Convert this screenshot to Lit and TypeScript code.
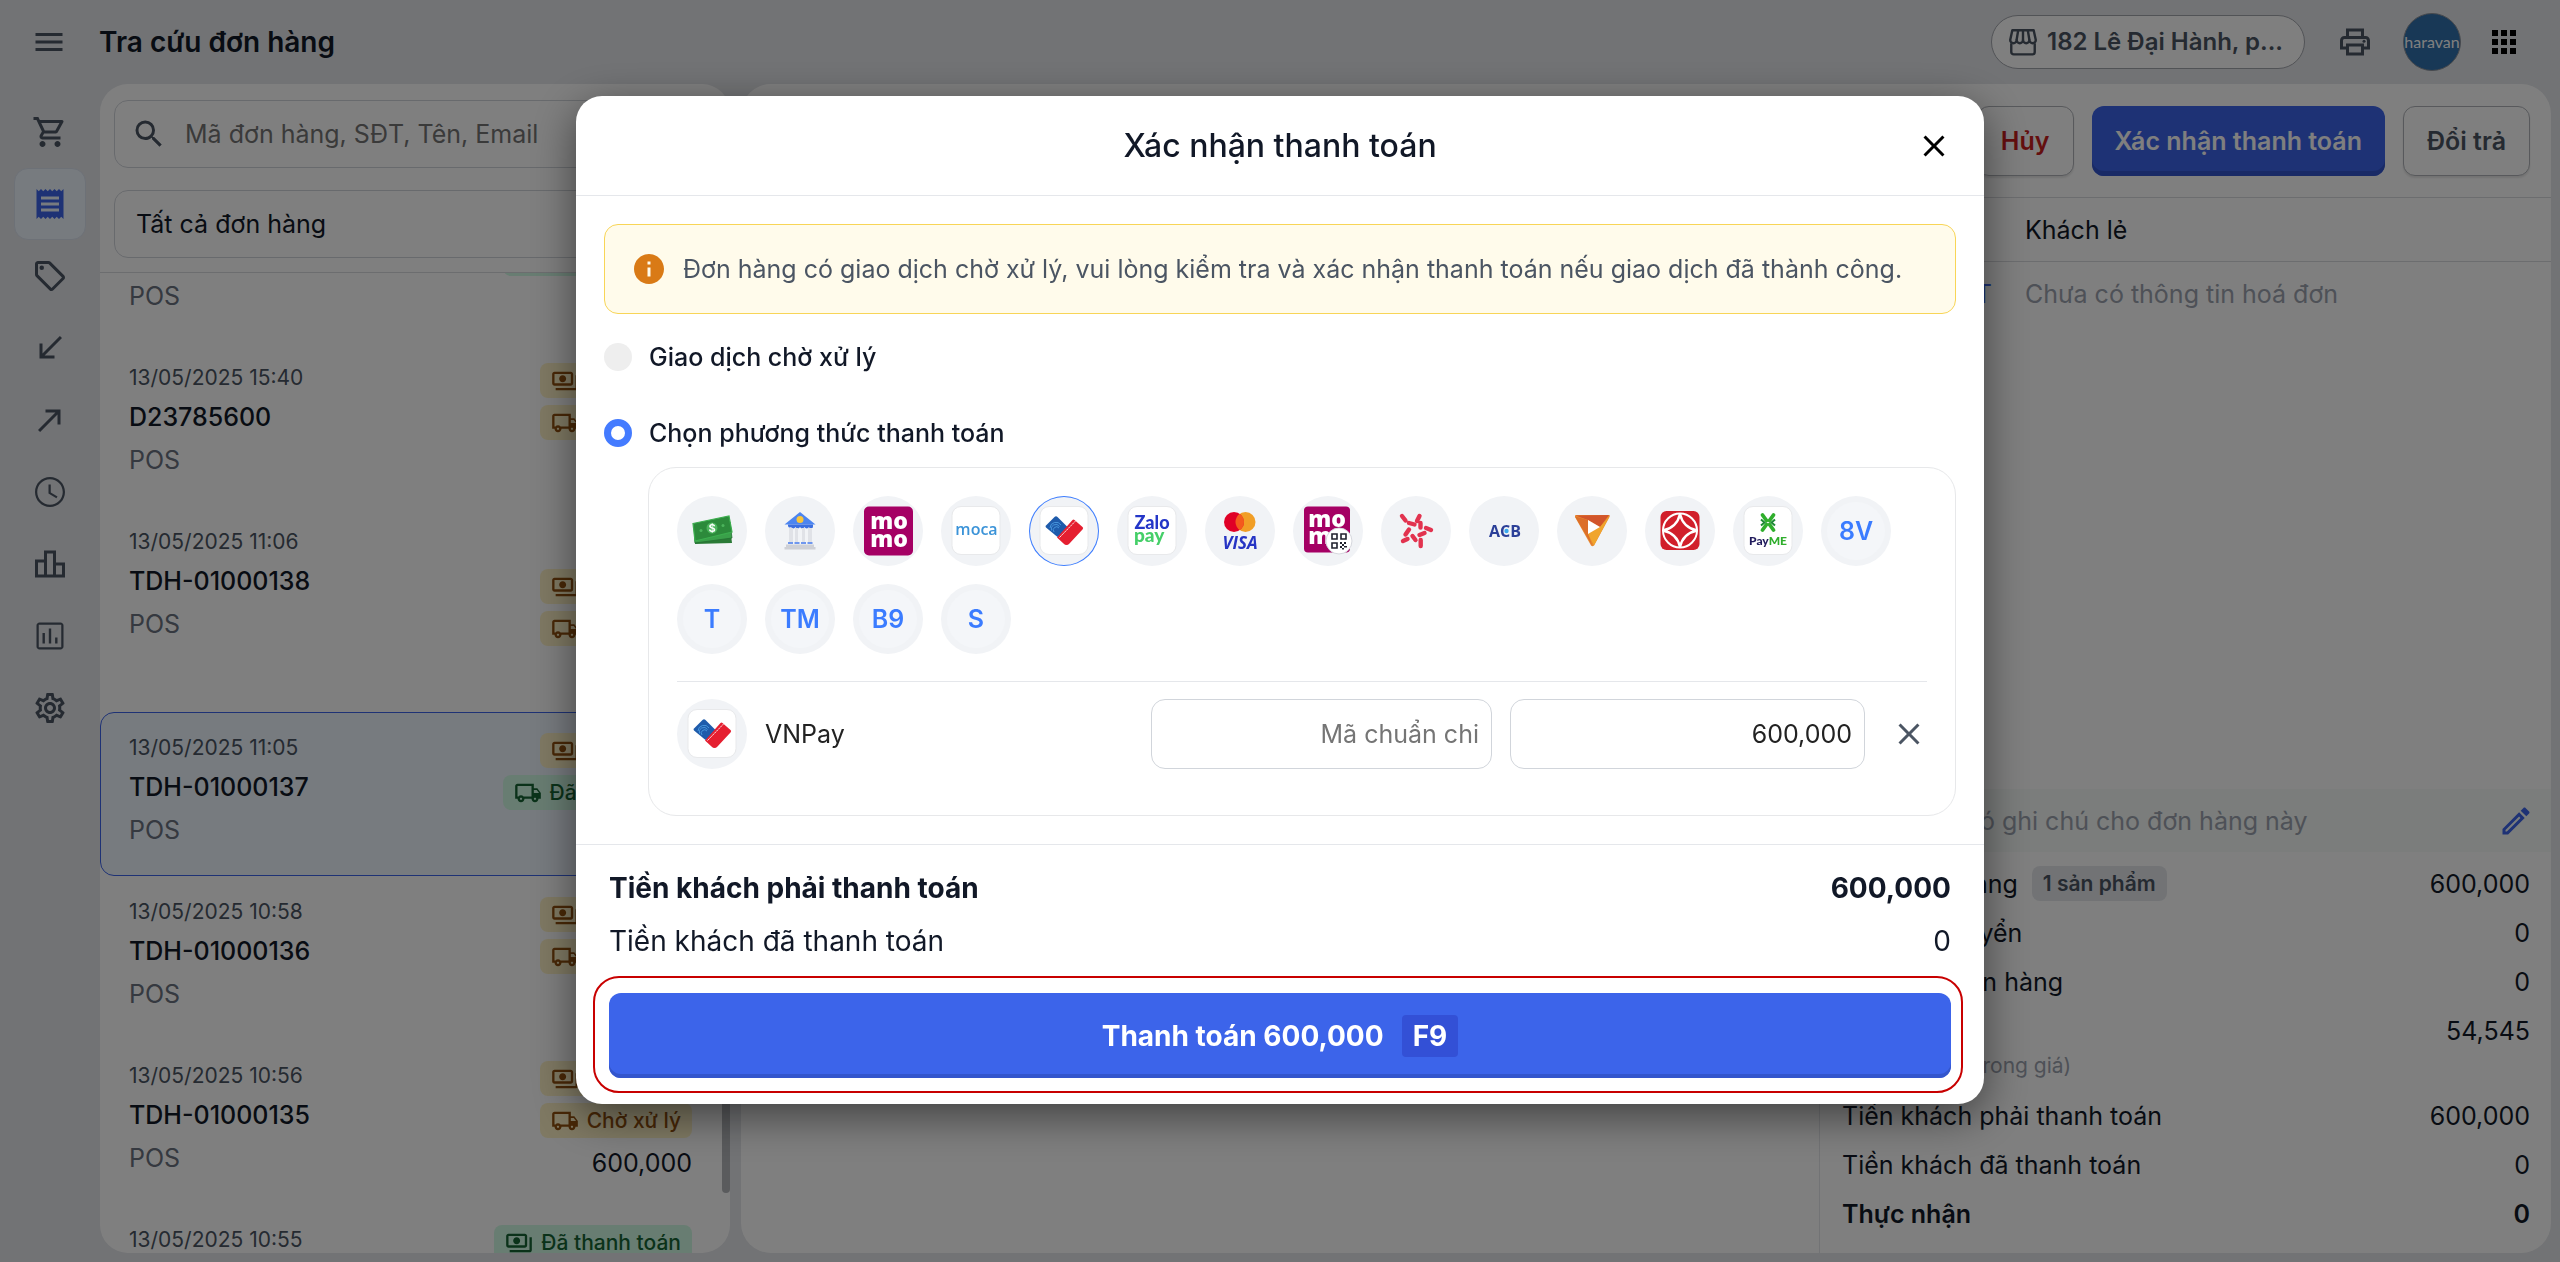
import { LitElement, html, css, svg, nothing } from "lit";
import type { TemplateResult, SVGTemplateResult } from "lit";
import { customElement, property, state } from "lit/decorators.js";
import { classMap } from "lit/directives/class-map.js";

const ICONS: Record<string, SVGTemplateResult> = {
  menu: svg`<path d="M3 18h18v-2H3v2zm0-5h18v-2H3v2zm0-7v2h18V6H3z"/>`,
  cart: svg`<path d="M15.55 13c.75 0 1.41-.41 1.75-1.03l3.58-6.49A.996.996 0 0 0 20.01 4H5.21l-.94-2H1v2h2l3.6 7.59-1.35 2.44C4.52 15.37 5.48 17 7 17h12v-2H7l1.1-2h7.45zM6.16 6h12.15l-2.76 5H8.53L6.16 6zM7 18c-1.1 0-1.99.9-1.99 2S5.9 22 7 22s2-.9 2-2-.9-2-2-2zm10 0c-1.1 0-1.99.9-1.99 2s.89 2 1.99 2 2-.9 2-2-.9-2-2-2z"/>`,
  receipt: svg`<path d="M18 17H6v-2h12v2zm0-4H6v-2h12v2zm0-4H6V7h12v2zM3 22l1.5-1.5L6 22l1.5-1.5L9 22l1.5-1.5L12 22l1.5-1.5L15 22l1.5-1.5L18 22l1.5-1.5L21 22V2l-1.5 1.5L18 2l-1.5 1.5L15 2l-1.5 1.5L12 2l-1.5 1.5L9 2 7.5 3.5 6 2 4.5 3.5 3 2v20z"/>`,
  tag: svg`<path d="M21.41 11.58l-9-9C12.05 2.22 11.55 2 11 2H4c-1.1 0-2 .9-2 2v7c0 .55.22 1.05.59 1.42l9 9c.36.36.86.58 1.41.58s1.05-.22 1.41-.59l7-7c.37-.36.59-.86.59-1.41s-.23-1.06-.59-1.42zM13 20.01L4 11V4h7v-.01l9 9-7 7.02z"/><circle cx="6.5" cy="6.5" r="1.5"/>`,
  southWest: svg`<path d="M15 19v-2H8.41L20 5.41 18.59 4 7 15.59V9H5v10h10z"/>`,
  northEast: svg`<path d="M9 5v2h6.59L4 18.59 5.41 20 17 8.41V15h2V5H9z"/>`,
  clock: svg`<path d="M11.99 2C6.47 2 2 6.48 2 12s4.47 10 9.99 10C17.52 22 22 17.52 22 12S17.52 2 11.99 2zM12 20.5c-4.7 0-8.5-3.8-8.5-8.5s3.8-8.5 8.5-8.5 8.5 3.8 8.5 8.5-3.8 8.5-8.5 8.5zm.5-13.5H11v6l5.25 3.15.75-1.23-4.5-2.67z"/>`,
  board: svg`<path d="M16 11V3H8v6H2v12h20V11h-6zm-6-6h4v14h-4V5zm-6 6h4v8H4v-8zm16 8h-4v-6h4v6z"/>`,
  report: svg`<path d="M19 3H5c-1.1 0-2 .9-2 2v14c0 1.1.9 2 2 2h14c1.1 0 2-.9 2-2V5c0-1.1-.9-2-2-2zm.5 16.5h-15v-15h15v15zM7 10h1.6v7H7zm4.2-3h1.6v10h-1.6zm4.2 6H17v4h-1.6z"/>`,
  gear: svg`<path d="M19.43 12.98c.04-.32.07-.64.07-.98 0-.34-.03-.66-.07-.98l2.11-1.65c.19-.15.24-.42.12-.64l-2-3.46c-.09-.16-.26-.25-.44-.25-.06 0-.12.01-.17.03l-2.49 1c-.52-.4-1.08-.73-1.69-.98l-.38-2.65C14.46 2.18 14.25 2 14 2h-4c-.25 0-.46.18-.49.42l-.38 2.65c-.61.25-1.17.59-1.69.98l-2.49-1c-.06-.02-.12-.03-.18-.03-.17 0-.34.09-.43.25l-2 3.46c-.13.22-.07.49.12.64l2.11 1.65c-.04.32-.07.65-.07.98 0 .33.03.66.07.98l-2.11 1.65c-.19.15-.24.42-.12.64l2 3.46c.09.16.26.25.44.25.06 0 .12-.01.17-.03l2.49-1c.52.4 1.08.73 1.69.98l.38 2.65c.03.24.24.42.49.42h4c.25 0 .46-.18.49-.42l.38-2.65c.61-.25 1.17-.59 1.69-.98l2.49 1c.06.02.12.03.18.03.17 0 .34-.09.43-.25l2-3.46c.12-.22.07-.49-.12-.64l-2.11-1.65zm-1.98-1.71c.04.31.05.52.05.73 0 .21-.02.43-.05.73l-.14 1.13.89.7 1.08.84-.7 1.21-1.27-.51-1.04-.42-.9.68c-.43.32-.84.56-1.25.73l-1.06.43-.16 1.13-.2 1.35h-1.4l-.19-1.35-.16-1.13-1.06-.43c-.43-.18-.83-.41-1.23-.71l-.91-.7-1.06.43-1.27.51-.7-1.21 1.08-.84.89-.7-.14-1.13c-.03-.31-.05-.54-.05-.74s.02-.43.05-.73l.14-1.13-.89-.7-1.08-.84.7-1.21 1.27.51 1.04.42.9-.68c.43-.32.84-.56 1.25-.73l1.06-.43.16-1.13.2-1.35h1.39l.19 1.35.16 1.13 1.06.43c.43.18.83.41 1.23.71l.91.7 1.06-.43 1.27-.51.7 1.21-1.07.85-.89.7.14 1.13zM12 8c-2.21 0-4 1.79-4 4s1.79 4 4 4 4-1.79 4-4-1.79-4-4-4zm0 6c-1.1 0-2-.9-2-2s.9-2 2-2 2 .9 2 2-.9 2-2 2z"/>`,
  search: svg`<path d="M15.5 14h-.79l-.28-.27A6.471 6.471 0 0 0 16 9.5 6.5 6.5 0 1 0 9.5 16c1.61 0 3.09-.59 4.23-1.57l.27.28v.79l5 4.99L20.49 19l-4.99-5zm-6 0C7.01 14 5 11.99 5 9.5S7.01 5 9.5 5 14 7.01 14 9.5 11.99 14 9.5 14z"/>`,
  payments: svg`<path d="M19 14V6c0-1.1-.9-2-2-2H3c-1.1 0-2 .9-2 2v8c0 1.1.9 2 2 2h14c1.1 0 2-.9 2-2zm-2 0H3V6h14v8zm-7-7c-1.66 0-3 1.34-3 3s1.34 3 3 3 3-1.34 3-3-1.34-3-3-3zm13 0v11c0 1.1-.9 2-2 2H4v-2h17V7h2z"/>`,
  truck: svg`<path d="M20 8h-3V4H3c-1.1 0-2 .9-2 2v11h2c0 1.66 1.34 3 3 3s3-1.34 3-3h6c0 1.66 1.34 3 3 3s3-1.34 3-3h2v-5l-3-4zM6 18c-.55 0-1-.45-1-1s.45-1 1-1 1 .45 1 1-.45 1-1 1zm9-3H8.22c-.55-.61-1.33-1-2.22-1s-1.67.39-2.22 1H3V6h12v9zm3 3c-.55 0-1-.45-1-1s.45-1 1-1 1 .45 1 1-.45 1-1 1zm-1-6V9.5h2.5l1.96 2.5H17z"/>`,
  print: svg`<path d="M19 8h-1V3H6v5H5c-1.66 0-3 1.34-3 3v6h4v4h12v-4h4v-6c0-1.66-1.34-3-3-3zM8 5h8v3H8V5zm8 12v2H8v-4h8v2zm2-2v-2H6v2H4v-4c0-.55.45-1 1-1h14c.55 0 1 .45 1 1v4h-2z"/><circle cx="18" cy="11.5" r="1"/>`,
  apps: svg`<path d="M4 8h4V4H4v4zm6 12h4v-4h-4v4zm-6 0h4v-4H4v4zm0-6h4v-4H4v4zm6 0h4v-4h-4v4zm6-10v4h4V4h-4zm-6 4h4V4h-4v4zm6 6h4v-4h-4v4zm0 6h4v-4h-4v4z"/>`,
  edit: svg`<path d="M14.06 9.02l.92.92L5.92 19H5v-.92l9.06-9.06M17.66 3c-.25 0-.51.1-.7.29l-1.83 1.83 3.75 3.75 1.83-1.83c.39-.39.39-1.02 0-1.41l-2.34-2.34c-.2-.2-.45-.29-.71-.29zm-3.6 3.19L3 17.25V21h3.75L17.81 9.94l-3.75-3.75z"/>`,
  info: svg`<path d="M12 2C6.48 2 2 6.48 2 12s4.48 10 10 10 10-4.48 10-10S17.52 2 12 2zm1 15h-2v-6h2v6zm0-8h-2V7h2v2z"/>`,
  close: svg`<path d="M19 6.41L17.59 5 12 10.59 6.41 5 5 6.41 10.59 12 5 17.59 6.41 19 12 13.41 17.59 19 19 17.59 13.41 12z"/>`,
  store: svg`<g fill="none" stroke="currentColor" stroke-width="1.8" stroke-linejoin="round"><path d="M4 3.2h16l1.6 7.3a2.4 2.4 0 0 1-4.8 0 2.4 2.4 0 0 1-4.8 0 2.4 2.4 0 0 1-4.8 0 2.4 2.4 0 0 1-4.8 0z"/><path d="M8.4 3.2l-1.2 7.3M12 3.2v7.3M15.6 3.2l1.2 7.3M3.2 13v6.5a1.8 1.8 0 0 0 1.8 1.8h14a1.8 1.8 0 0 0 1.8-1.8V13"/></g>`,
};

const icon = (name: string, cls = "") =>
  html`<svg class="icon ${cls}" viewBox="0 0 24 24" fill="currentColor" aria-hidden="true">${ICONS[name]}</svg>`;

const tile = svg`<rect x="11" y="10.5" width="48" height="48" rx="9" fill="#fff" stroke="#e8e9eb"/>`;

const LOGOS: Record<string, SVGTemplateResult> = {
  cash: svg`
    <path d="M17 33l36-2 2 16-37 1z" fill="#2a7a36"/>
    <path d="M17 30l36-4 2 16-37 5z" fill="#3aa04a" stroke="#257032" stroke-width=".8"/>
    <path d="M16 27.500l36-7.500 3 16-37 9z" fill="#2c8a3b" stroke="#3cae4e" stroke-width="1.2"/>
    <circle cx="35" cy="32" r="5.500" fill="#4cb45c"/><circle cx="24" cy="34.500" r="1.500" fill="#4cb45c"/><circle cx="46" cy="29.500" r="1.500" fill="#4cb45c"/>
    <text x="35" y="36" class="l-dollar">$</text>`,
  bank: svg`
    <path d="M35 16l15.500 12.500h-31z" fill="#4c85f0"/>
    <path d="M23 28.500h25v1.500a2 2 0 0 1-4 1 2.500 2.500 0 0 1-4.500 0 2.500 2.500 0 0 1-4.500 0 2.500 2.500 0 0 1-4.500 0 2.500 2.500 0 0 1-4.500 0 2 2 0 0 1-3-1z" fill="#3b6fe0"/>
    <circle cx="35" cy="23.500" r="3.500" fill="#f9c53c"/>
    <path d="M24 32h4v14h-4zM30 32h3v14h-3zM37 32h3v14h-3zM43 32h4v14h-4z" fill="#e0e2e7"/>
    <path d="M23 46h5v2h-5zM29.500 46h5v2h-5zM36 46h5v2h-5zM42.500 46h5v2h-5z" fill="#6f97ee"/>
    <path d="M21 48.500h28v2.500h1.500v2.500h-31V51H21z" fill="#ced0d6"/>`,
  momo: svg`
    <rect x="11" y="10.500" width="49" height="49" rx="5" fill="#a50064"/>
    <text x="36" y="33" class="l-momo">mo</text><text x="36" y="51" class="l-momo">mo</text>`,
  moca: svg`${tile}<text x="35.500" y="39" class="l-moca">moca</text>`,
  vnpay: svg`${tile}
    <path d="M17 29.500l8.500-8.500q1.500-1.500 3 0l11 11-11 9-11.500-9.500q-1-1 0-2z" fill="#1e5bab"/>
    <path d="M21 32a6 6 0 0 1 11-3M22.500 34.500a4.500 4.500 0 0 1 8-4M25 36a3 3 0 0 1 5-4" fill="none" stroke="#4b9be0" stroke-width=".9"/>
    <path d="M28 41.500l15.500-17.500q1-1 2 0l8 7q1.200 1 .2 2.200L40.500 47.500q-3 3-6 0z" fill="#e51f30"/>
    <path d="M30.500 41.500l16-16.500" stroke="#fff" stroke-width=".9" stroke-dasharray="2 .6"/>`,
  zalo: svg`${tile}<text x="35" y="33" class="l-zalo">Zalo</text><text x="17" y="46" class="l-pay">pay</text>`,
  visa: svg`
    <circle cx="40.500" cy="26" r="10" fill="#f19e26"/><circle cx="29" cy="26" r="10" fill="#e00026"/>
    <path d="M34.750 17.800a10 10 0 0 1 0 16.400 10 10 0 0 1 0-16.400z" fill="#f45a1d"/>
    <text x="35" y="53" class="l-visa">VISA</text>`,
  momoqr: svg`
    <rect x="11" y="10.500" width="46" height="46" rx="4" fill="#a50064"/>
    <text x="34" y="31" class="l-momo">mo</text><text x="34" y="48" class="l-momo">mo</text>
    <circle cx="46" cy="45" r="13" fill="#fff" stroke="#d6d8de"/>
    <g fill="none" stroke="#20222e" stroke-width="1.600"><path d="M39 38h5v5h-5zM48 38h5v5h-5zM39 47h5v5h-5z"/></g>
    <path d="M47 46h2v2h-2zM51 46h2v2h-2zM49 48h2v2h-2zM47 50h2v2h-2zM51 50h3v1.500h-3zM49 52h2v1.500h-2z" fill="#20222e"/>`,
  star: svg`<path fill="none" stroke="#e2334f" stroke-width="4.400" stroke-linecap="round" d="M21 20l3.500 4.500M28 27l5.500 1.500M38.500 20L36 25M39.500 27v4.500M45 32l5 2M38.500 39l5-2M39.700 44v6M31.500 40l3 4M22 45l4.500-2M24.500 38.500l3.500-5"/>`,
  acb: svg`<text x="36" y="41" class="l-acb">ACB</text><circle cx="37.500" cy="35" r="2.200" fill="#3aa9ee"/>`,
  play: svg`
    <path d="M19 19h33q1.500 0 .5 2L37 49.500q-1.500 1.500-3 0L18 21q-.5-2 1-2z" fill="#e8892f"/>
    <path d="M18.500 19.500L52 19l-9 12-12-7z" fill="#d2552b"/><path d="M43 31l9.500-11L37 49.500 31 38z" fill="#f0a52c"/><path d="M18 20.500L31 24v14l4.500 12z" fill="#dc6f2a"/>
    <path d="M31 24l12 7-12 7z" fill="#fff"/>`,
  tech: svg`
    <rect x="15.500" y="15" width="39" height="39" rx="6" fill="#d11f2b"/>
    <circle cx="35" cy="34.500" r="17" fill="none" stroke="#fff" stroke-width="2"/>
    <path d="M35 18q3 13.500 17 16.500-14 3-17 16.500-3-13.500-17-16.500 14-3 17-16.500z" fill="#d11f2b" stroke="#fff" stroke-width="2.400"/>`,
  payme: svg`${tile}
    <path d="M29.500 19l4 5.500M40.500 19l-4 5.500M29.500 34l4-5.500M40.500 34l-4-5.500" stroke="#2fae2c" stroke-width="3.800" stroke-linecap="round"/>
    <path d="M28 23.500l3.500 3-3.500 3M42 23.500l-3.500 3 3.500 3" stroke="#1d8a35" stroke-width="2" fill="none"/>
    <text x="35" y="49" class="l-payme">Pay<tspan fill="#2fae2c">ME</tspan></text>`,
};

interface Method { id: string; label: string; logo?: string; }
const METHODS: Method[] = [
  { id: "cash", label: "Tiền mặt", logo: "cash" },
  { id: "bank", label: "Chuyển khoản", logo: "bank" },
  { id: "momo", label: "MoMo", logo: "momo" },
  { id: "moca", label: "Moca", logo: "moca" },
  { id: "vnpay", label: "VNPay", logo: "vnpay" },
  { id: "zalo", label: "ZaloPay", logo: "zalo" },
  { id: "visa", label: "Visa", logo: "visa" },
  { id: "momoqr", label: "MoMo QR", logo: "momoqr" },
  { id: "star", label: "VPBank", logo: "star" },
  { id: "acb", label: "ACB", logo: "acb" },
  { id: "play", label: "Payoo", logo: "play" },
  { id: "tech", label: "SSI", logo: "tech" },
  { id: "payme", label: "PayME", logo: "payme" },
  { id: "8v", label: "8V" },
  { id: "t", label: "T" },
  { id: "tm", label: "TM" },
  { id: "b9", label: "B9" },
  { id: "s", label: "S" },
];

interface Badge { icon: string; text: string; ok?: boolean; }
interface Order { time: string; code: string; badges: Badge[]; selected?: boolean; }
const paid: Badge = { icon: "payments", text: "Đã thanh toán", ok: true };
const delivered: Badge = { icon: "truck", text: "Đã giao hàng", ok: true };
const payWait: Badge = { icon: "payments", text: "Chờ xử lý" };
const shipWait: Badge = { icon: "truck", text: "Chờ xử lý" };
const ORDERS: Order[] = [
  { time: "13/05/2025 15:42", code: "TDH-01000139", badges: [paid, delivered] },
  { time: "13/05/2025 15:40", code: "D23785600", badges: [payWait, shipWait] },
  { time: "13/05/2025 11:06", code: "TDH-01000138", badges: [{ icon: "tag", text: "Trả" }, payWait, shipWait] },
  { time: "13/05/2025 11:05", code: "TDH-01000137", badges: [payWait, delivered], selected: true },
  { time: "13/05/2025 10:58", code: "TDH-01000136", badges: [payWait, shipWait] },
  { time: "13/05/2025 10:56", code: "TDH-01000135", badges: [payWait, shipWait] },
  { time: "13/05/2025 10:55", code: "TDH-01000134", badges: [paid, delivered] },
];

const base = css`
  * { box-sizing: border-box; }
  button, input, select { font: inherit; color: inherit; }
  button { cursor: pointer; padding: 0; border: 0; background: none; }
  h1, h2, p { margin: 0; font-weight: inherit; }
  .icon { width: 36px; height: 36px; display: block; flex: none; }
`;

@customElement("pos-sidebar")
export class PosSidebar extends LitElement {
  static styles = [base, css`
    :host { display: block; }
    nav { display: flex; flex-direction: column; align-items: center; padding: 12px 1px 0 0; }
    a { display: grid; place-items: center; width: 72px; height: 72px; color: #4b5563; border: 1px solid transparent; border-radius: 14px; }
    .active { color: #3c64ea; background: #eff6ff; border-color: #dbe3ef; }
  `];
  render() {
    const items: [string, string][] = [
      ["cart", "Bán hàng"], ["receipt", "Đơn hàng"], ["tag", "Sản phẩm"], ["southWest", "Nhập"], ["northEast", "Xuất"],
      ["clock", "Ca làm việc"], ["board", "Xếp hạng"], ["report", "Báo cáo"], ["gear", "Cài đặt"],
    ];
    return html`<nav>${items.map(([name, label]) => html`
      <a href="#" aria-label=${label} class=${classMap({ active: name === "receipt" })}>${icon(name)}</a>`)}</nav>`;
  }
}

@customElement("order-list")
export class OrderList extends LitElement {
  static styles = [base, css`
    :host { display: flex; flex-direction: column; position: relative; background: #fff; border-radius: 28px; overflow: hidden; min-height: 0; }
    .filters { display: flex; flex-direction: column; gap: 22px; padding: 16px 14px 14px; border-bottom: 1px solid #d9dbdf; }
    .field { display: flex; align-items: center; height: 68px; border: 1px solid #d1d5db; border-radius: 14px; }
    .search { padding: 0 16px; gap: 16px; color: #4b5563; }
    .search input { flex: 1; min-width: 0; border: 0; outline: 0; background: none; }
    .search input::placeholder { color: #757575; }
    select.field { width: 100%; padding: 0 21px; appearance: none; background: #fff; color: #111827; }
    .scroll { flex: 1; min-height: 0; overflow: hidden; }
    .card { display: flex; justify-content: space-between; padding: 20px 37px 0 28px; min-height: 164px; border: 1px solid transparent; border-radius: 14px; }
    .selected { background: #eff6ff; border-color: #3c64ea; }
    .time { font-size: 21px; line-height: 30px; color: #4b5563; }
    .code { font-weight: 500; line-height: 48px; color: #111827; }
    .src { line-height: 38px; color: #6b7280; }
    .side { display: flex; flex-direction: column; align-items: flex-end; gap: 7px; padding-bottom: 22px; }
    .badge { display: flex; align-items: center; gap: 8px; height: 35px; padding: 0 11px; border-radius: 8px; background: #fef3c7; color: #92500e; font-size: 21px; font-weight: 500; }
    .badge .icon { width: 28px; height: 28px; }
    .ok { background: #d1fae5; color: #166534; }
    .amount { line-height: 36px; color: #111827; }
    .thumb { position: absolute; right: 0; bottom: 60px; width: 8px; height: 620px; border-radius: 4px; background: #b4b6ba; }
  `];
  updated() {
    const scroller = this.renderRoot.querySelector(".scroll");
    if (scroller) scroller.scrollTop = 95;
  }
  render() {
    return html`
      <div class="filters">
        <label class="field search">${icon("search")}<input type="search" aria-label="Tìm đơn hàng" placeholder="Mã đơn hàng, SĐT, Tên, Email"></label>
        <select class="field" aria-label="Loại đơn hàng"><option>Tất cả đơn hàng</option></select>
      </div>
      <div class="scroll">${ORDERS.map((o) => html`
        <article class=${classMap({ card: true, selected: !!o.selected })}>
          <div>
            <p class="time">${o.time}</p>
            <p class="code">${o.code}</p>
            <p class="src">POS</p>
          </div>
          <div class="side">
            ${o.badges.map((b) => html`<span class=${classMap({ badge: true, ok: !!b.ok })}>${icon(b.icon)}${b.text}</span>`)}
            <span class="amount">600,000</span>
          </div>
        </article>`)}
      </div>
      <div class="thumb"></div>`;
  }
}

@customElement("order-detail")
export class OrderDetail extends LitElement {
  static styles = [base, css`
    :host { display: flex; flex-direction: column; background: #fff; border-radius: 30px; overflow: hidden; min-height: 0; }
    .actions { display: flex; justify-content: flex-end; gap: 18px; padding: 22px 21px 21px; border-bottom: 1px solid #d9dbdf; }
    .btn { height: 70px; padding: 0 23px; border: 1px solid #b0b3b9; border-radius: 12px; background: #fff; color: #4b5563; font-weight: 600; box-shadow: 0 2px 2px #0000001a; }
    .danger { color: #c81e1e; }
    .primary { background: #3c64ea; color: #fff; border: 0; box-shadow: inset 0 -5px 0 #3355cc; }
    .body { flex: 1; display: flex; min-height: 0; }
    .items { flex: 1; }
    aside { width: 732px; display: flex; flex-direction: column; border-left: 1px solid #e5e7eb; }
    .row { display: flex; align-items: center; height: 64px; padding-left: 22px; }
    .row .tag { width: 183px; padding-right: 33px; text-align: right; color: #3c64ea; }
    .line { border-bottom: 1px solid #d9dbdf; }
    .muted { color: #9ca3af; }
    .note { margin-top: auto; display: flex; align-items: center; justify-content: space-between; height: 63px; padding: 0 17px 0 76px; background: #f6faf8; color: #9ca3af; }
    .note button { color: #3c64ea; }
    .totals { display: flex; flex-direction: column; padding: 7px 21px 15px 22px; }
    .t { display: flex; justify-content: space-between; align-items: center; height: 49px; }
    .t .chip { display: inline-flex; align-items: center; height: 35px; margin-left: 14px; padding: 0 11px; border-radius: 8px; background: #e5e7eb; color: #4b5563; font-size: 21px; font-weight: 600; }
    .t span.l { display: flex; align-items: center; }
    .sub { height: 36px; font-size: 21px; color: #9ca3af; line-height: 22px; }
    .strong { font-weight: 600; }
  `];
  private line(label: string, value: string, extra: unknown = nothing, strong = false) {
    return html`<div class=${classMap({ t: true, strong })}><span class="l">${label}${extra}</span><span>${value}</span></div>`;
  }
  render() {
    return html`
      <div class="actions">
        <button class="btn danger">Hủy</button>
        <button class="btn primary">Xác nhận thanh toán</button>
        <button class="btn">Đổi trả</button>
      </div>
      <div class="body">
        <div class="items"></div>
        <aside>
          <div class="row line"><span class="tag"></span>Khách lẻ</div>
          <div class="row muted"><a class="tag">VAT</a>Chưa có thông tin hoá đơn</div>
          <div class="note"><span>Chưa có ghi chú cho đơn hàng này</span><button aria-label="Sửa ghi chú">${icon("edit")}</button></div>
          <div class="totals">
            ${this.line("Tổng tiền hàng", "600,000", html`<span class="chip">1 sản phẩm</span>`)}
            ${this.line("Phí vận chuyển", "0")}
            ${this.line("Giảm giá đơn hàng", "0")}
            ${this.line("Thuế", "54,545")}
            <p class="sub">(Đã bao gồm trong giá)</p>
            ${this.line("Tiền khách phải thanh toán", "600,000")}
            ${this.line("Tiền khách đã thanh toán", "0")}
            ${this.line("Thực nhận", "0", nothing, true)}
          </div>
        </aside>
      </div>`;
  }
}

@customElement("method-logo")
export class MethodLogo extends LitElement {
  @property() logo = "";
  @property() label = "";
  @property({ type: Boolean, reflect: true }) selected = false;
  static styles = css`
    :host { display: grid; place-items: center; width: 70px; height: 70px; border-radius: 50%; background: #f1f3f6; color: #3b7cff; font-size: 25px; font-weight: 600; }
    :host([selected]) { box-shadow: inset 0 0 0 1px #3b7cff; }
    svg { width: 70px; height: 70px; display: block; }
    .letters { display: grid; place-items: center; width: 58px; height: 58px; border-radius: 50%; background: #f4f6f9; }
    text { font-family: Inter, sans-serif; font-weight: 700; text-anchor: middle; }
    .l-dollar { font-size: 11px; fill: #fff; }
    .l-momo { font-family: "Open Sans", sans-serif; font-size: 23px; font-weight: 800; fill: #fff; }
    .l-moca { font-family: "Open Sans", sans-serif; font-size: 16px; font-weight: 600; fill: #3b93d8; }
    .l-zalo { font-family: Lato, sans-serif; font-size: 18px; font-weight: 900; fill: #2436c8; }
    .l-pay { font-family: Lato, sans-serif; font-size: 19px; font-weight: 900; fill: #45cf68; text-anchor: start; }
    .l-visa { font-family: "Open Sans", sans-serif; font-size: 17px; font-weight: 700; font-style: italic; fill: #2634c4; }
    .l-acb { font-family: "Open Sans", sans-serif; font-size: 16px; fill: #2b3f98; }
    .l-payme { font-family: Lato, sans-serif; font-size: 12px; font-weight: 900; fill: #201a5c; }
  `;
  render(): TemplateResult {
    return this.logo
      ? html`<svg viewBox="0 0 70 70" role="img" aria-label=${this.label}>${LOGOS[this.logo]}</svg>`
      : html`<span class="letters">${this.label}</span>`;
  }
}

@customElement("payment-dialog")
export class PaymentDialog extends LitElement {
  @state() private method = "vnpay";
  static styles = [base, css`
    :host { display: block; width: 55%; background: #fff; border-radius: 26px; color: #111827; box-shadow: 0 12px 44px #00000080; }
    header { display: grid; grid-template-columns: 1fr auto 1fr; align-items: center; height: 100px; padding: 0 32px; border-bottom: 1px solid #e5e7eb; }
    h2 { grid-column: 2; font-size: 32px; font-weight: 500; line-height: 40px; }
    .close { justify-self: end; color: #000; }
    .content { padding: 28px; }
    .alert { display: flex; align-items: center; gap: 16px; height: 90px; padding: 0 26px; border: 1px solid #f8d557; border-radius: 14px; background: #fffbeb; color: #4b5563; }
    .alert .icon { color: #d97a16; }
    .option { display: flex; align-items: center; gap: 17px; width: max-content; line-height: 32px; font-weight: 500; }
    .pending { margin-top: 27px; }
    .choose { margin: 44px 0 18px; }
    .option input { appearance: none; width: 28px; height: 28px; margin: 0; border-radius: 50%; background: #eee; }
    .option input:checked { background: #fff; border: 7px solid #447bff; }
    .box { margin-left: 44px; padding: 28px 28px 29px; border: 1px solid #e7e8ea; border-radius: 28px; }
    .methods { display: flex; flex-wrap: wrap; gap: 18px; padding-bottom: 27px; border-bottom: 1px solid #e5e7eb; }
    .methods button { border-radius: 50%; }
    .pay-row { display: flex; align-items: center; gap: 18px; padding: 17px 0; }
    .name { flex: 1; color: #222; }
    .pay-row input { height: 70px; min-width: 0; padding: 0 12px; border: 1px solid #d1d5db; border-radius: 14px; background: #fff; color: #222; text-align: right; outline: 0; }
    .pay-row input::placeholder { color: #757575; }
    .ref { width: 341px; }
    .money { width: 355px; }
    .remove { margin: 0 0 0 8px; color: #4b5563; }
    footer { padding: 22px 21px 11px 17px; border-top: 1px solid #e5e7eb; }
    .sum { display: flex; justify-content: space-between; padding: 0 12px 0 16px; font-size: 28px; line-height: 42px; }
    .sum + .sum { margin-top: 11px; }
    .total { font-weight: 700; }
    .ring { margin-top: 14px; padding: 15px 10px 13px 14px; border: 2px solid #c80000; border-radius: 26px; }
    .submit { display: flex; align-items: center; justify-content: center; gap: 18px; width: 100%; height: 85px; border-radius: 12px; background: #3c64ea; color: #fff; font-size: 28px; font-weight: 700; box-shadow: inset 0 -4px 0 #3355cc; }
    kbd { display: grid; place-items: center; height: 42px; padding: 0 11px; border-radius: 4px; background: #3350d6; font: inherit; }
  `];
  render() {
    const current = METHODS.find((m) => m.id === this.method)!;
    return html`
      <header>
        <h2 id="title">Xác nhận thanh toán</h2>
        <button class="close" aria-label="Đóng">${icon("close")}</button>
      </header>
      <div class="content">
        <div class="alert" role="alert">${icon("info")}<span>Đơn hàng có giao dịch chờ xử lý, vui lòng kiểm tra và xác nhận thanh toán nếu giao dịch đã thành công.</span></div>
        <label class="option pending"><input type="radio" name="mode">Giao dịch chờ xử lý</label>
        <label class="option choose"><input type="radio" name="mode" checked>Chọn phương thức thanh toán</label>
        <div class="box">
          <div class="methods">${METHODS.map((m) => html`
            <button aria-label=${m.label} @click=${() => (this.method = m.id)}>
              <method-logo .logo=${m.logo ?? ""} .label=${m.label} ?selected=${m.id === this.method}></method-logo>
            </button>`)}</div>
          <div class="pay-row">
            <method-logo .logo=${current.logo ?? ""} .label=${current.label}></method-logo>
            <span class="name">${current.label}</span>
            <input class="ref" aria-label="Mã chuẩn chi" placeholder="Mã chuẩn chi">
            <input class="money" aria-label="Số tiền" value="600,000">
            <button class="remove" aria-label="Xóa">${icon("close")}</button>
          </div>
        </div>
      </div>
      <footer>
        <div class="sum total"><span>Tiền khách phải thanh toán</span><span>600,000</span></div>
        <div class="sum"><span>Tiền khách đã thanh toán</span><span>0</span></div>
        <div class="ring"><button class="submit">Thanh toán 600,000 <kbd>F9</kbd></button></div>
      </footer>`;
  }
}

@customElement("app-root")
export class AppRoot extends LitElement {
  static styles = [base, css`
    :host { display: block; font-family: Inter, "Noto Sans", sans-serif; font-size: 25px; line-height: 32px; color: #111827; }
    .app { display: grid; grid-template: 84px minmax(0, 1fr) / 100px minmax(0, 1fr); height: 100vh; background: #e4e6ea; }
    .top { grid-column: 1 / -1; display: flex; align-items: center; padding: 0 38px 0 31px; color: #4b5563; }
    h1 { margin-left: 32px; margin-right: auto; font-size: 28px; font-weight: 600; color: #111827; }
    .branch { display: flex; align-items: center; gap: 8px; height: 54px; padding: 0 21px 0 15px; margin-right: 32px; border: 1px solid #a3a6ad; border-radius: 27px; background: #fff; font-size: 24px; font-weight: 600; }
    .branch .icon { width: 32px; height: 32px; }
    .avatar { display: grid; place-items: center; width: 58px; height: 58px; margin: 0 25px 0 30px; border: 1px solid #8f949c; border-radius: 50%; background: #3070ac; color: #fff; font: 16px/16px Lato, sans-serif; overflow: hidden; }
    .apps { color: #000; }
    .panels { display: grid; grid-template-columns: 630px minmax(0, 1fr); gap: 11px; padding: 0 9px 9px 0; min-height: 0; }
    .overlay { position: fixed; inset: 0; display: flex; justify-content: center; align-items: flex-start; padding-top: 96px; background: #00000080; }
  `];
  render() {
    return html`
      <div class="app">
        <div class="top">
          <button aria-label="Menu">${icon("menu")}</button>
          <h1>Tra cứu đơn hàng</h1>
          <button class="branch">${icon("store")}182 Lê Đại Hành, p...</button>
          <button aria-label="In">${icon("print")}</button>
          <button class="avatar" aria-label="Tài khoản">haravan</button>
          <button class="apps" aria-label="Ứng dụng">${icon("apps")}</button>
        </div>
        <pos-sidebar></pos-sidebar>
        <main class="panels">
          <order-list></order-list>
          <order-detail></order-detail>
        </main>
      </div>
      <div class="overlay"><payment-dialog role="dialog" aria-modal="true" aria-label="Xác nhận thanh toán"></payment-dialog></div>`;
  }
}
